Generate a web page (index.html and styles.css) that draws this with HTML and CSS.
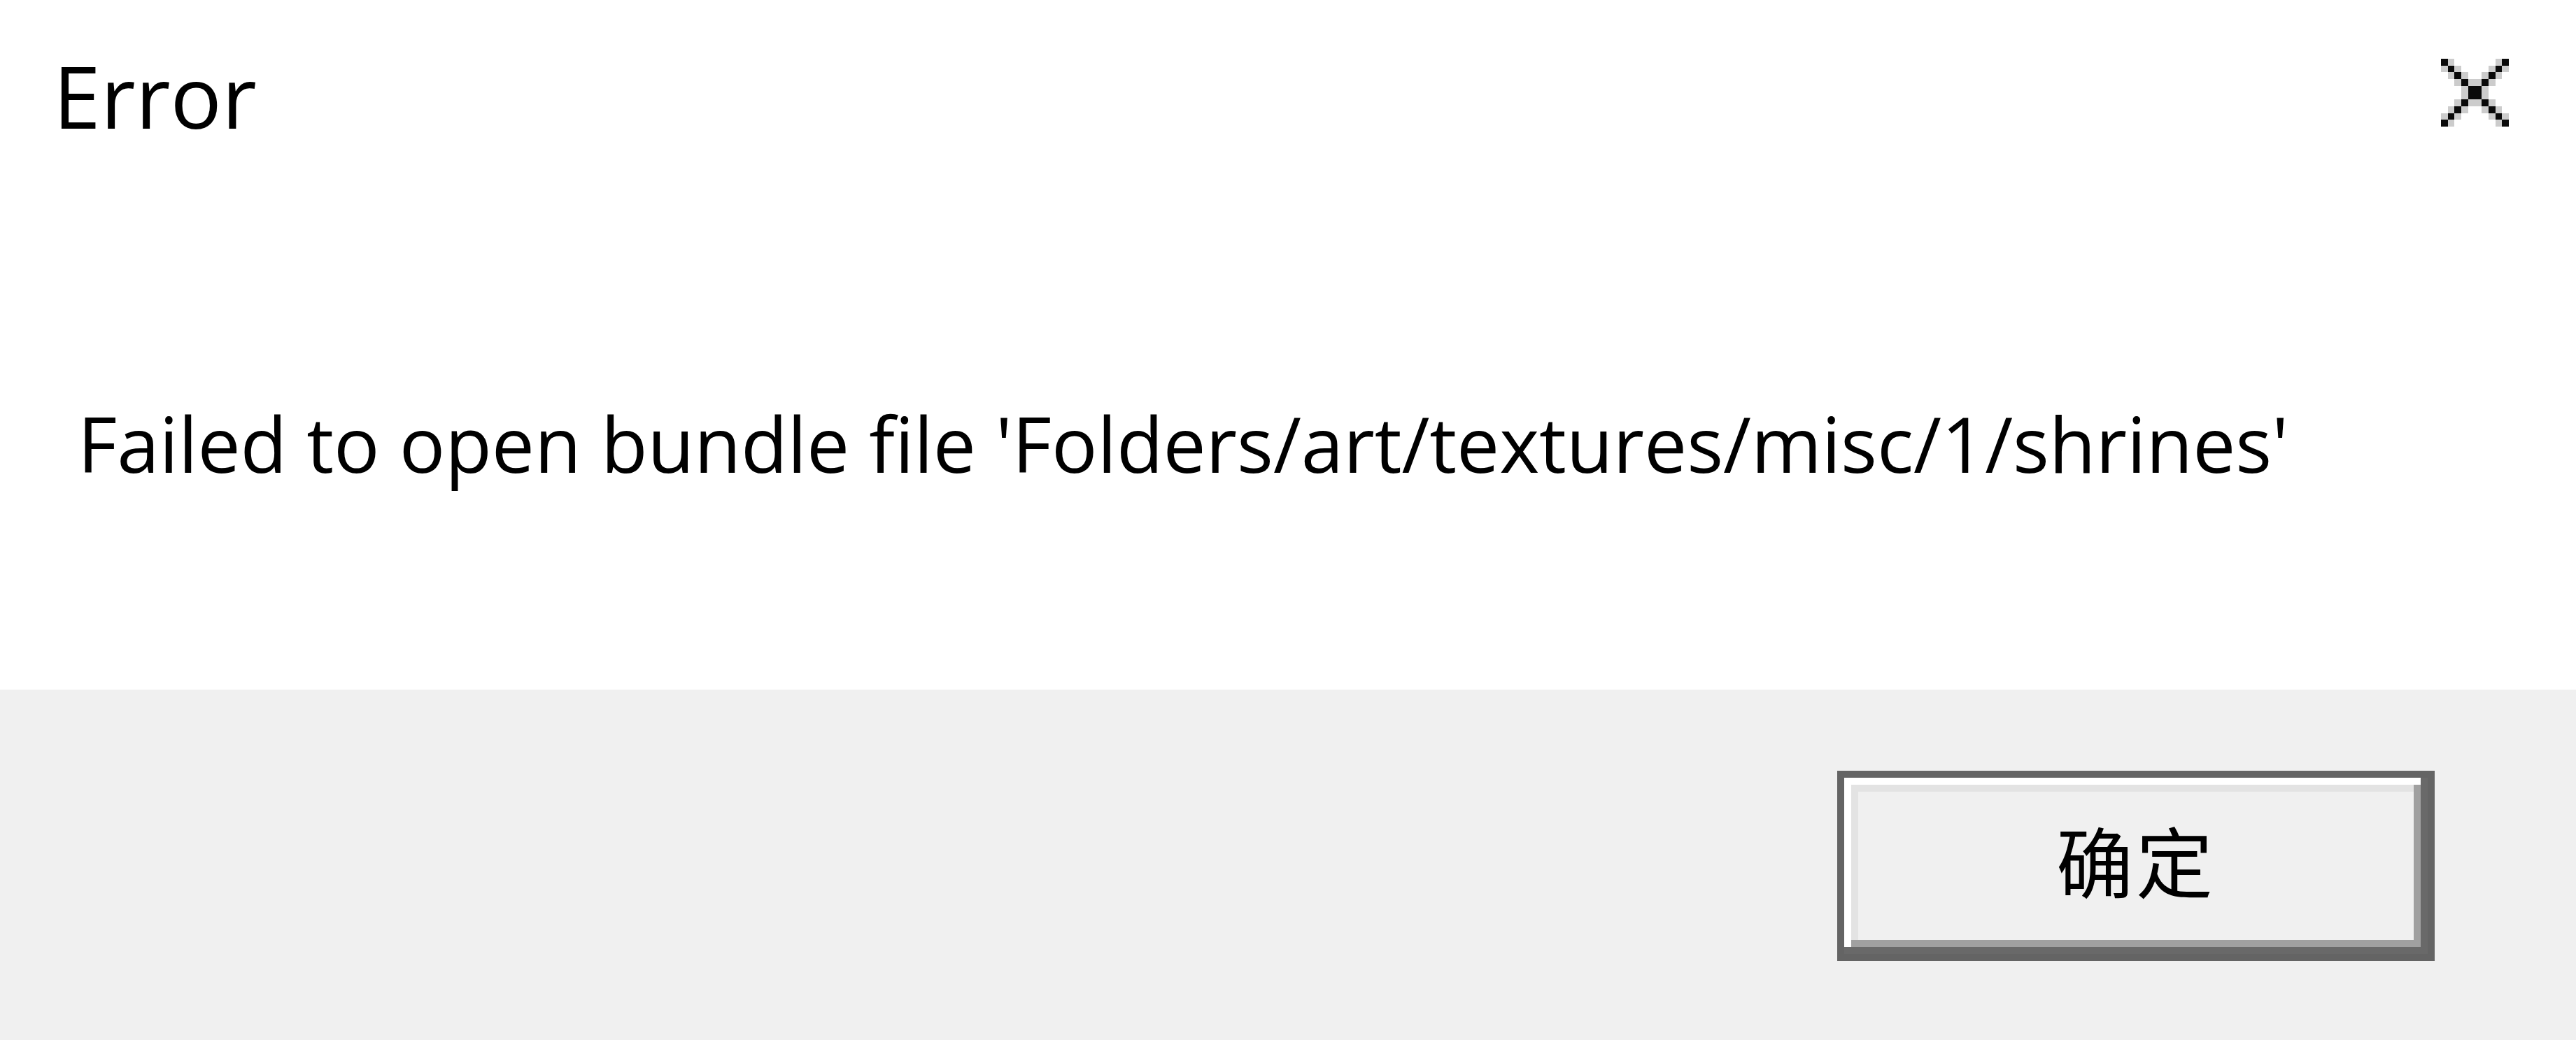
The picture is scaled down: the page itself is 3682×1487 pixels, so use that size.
FILE: index.html
```html
<!DOCTYPE html>
<html lang="en">
<head>
<meta charset="utf-8">
<title>Error</title>
<link rel="stylesheet" href="styles.css">
</head>
<body>
<div class="dialog">
  <div class="content">
    <div class="titlebar">
      <div class="title">Error</div>
      <div class="close" aria-label="Close">
        <svg viewBox="0 0 10 10" width="97" height="97" shape-rendering="crispEdges">
          <g fill="#cccccc">
            <rect x="1" y="0" width="1" height="1"/><rect x="8" y="0" width="1" height="1"/>
            <rect x="0" y="1" width="1" height="1"/><rect x="2" y="1" width="1" height="1"/><rect x="7" y="1" width="1" height="1"/><rect x="9" y="1" width="1" height="1"/>
            <rect x="1" y="2" width="1" height="1"/><rect x="3" y="2" width="1" height="1"/><rect x="6" y="2" width="1" height="1"/><rect x="8" y="2" width="1" height="1"/>
            <rect x="2" y="3" width="1" height="1"/><rect x="4" y="3" width="2" height="1"/><rect x="7" y="3" width="1" height="1"/>
            <rect x="3" y="4" width="1" height="2"/><rect x="6" y="4" width="1" height="2"/>
            <rect x="2" y="6" width="1" height="1"/><rect x="4" y="6" width="2" height="1"/><rect x="7" y="6" width="1" height="1"/>
            <rect x="1" y="7" width="1" height="1"/><rect x="3" y="7" width="1" height="1"/><rect x="6" y="7" width="1" height="1"/><rect x="8" y="7" width="1" height="1"/>
            <rect x="0" y="8" width="1" height="1"/><rect x="2" y="8" width="1" height="1"/><rect x="7" y="8" width="1" height="1"/><rect x="9" y="8" width="1" height="1"/>
            <rect x="1" y="9" width="1" height="1"/><rect x="8" y="9" width="1" height="1"/>
          </g>
          <g fill="#0a0a0a">
            <rect x="0" y="0" width="1" height="1"/><rect x="9" y="0" width="1" height="1"/>
            <rect x="1" y="1" width="1" height="1"/><rect x="8" y="1" width="1" height="1"/>
            <rect x="2" y="2" width="1" height="1"/><rect x="7" y="2" width="1" height="1"/>
            <rect x="3" y="3" width="1" height="1"/><rect x="6" y="3" width="1" height="1"/>
            <rect x="4" y="4" width="2" height="2"/>
            <rect x="3" y="6" width="1" height="1"/><rect x="6" y="6" width="1" height="1"/>
            <rect x="2" y="7" width="1" height="1"/><rect x="7" y="7" width="1" height="1"/>
            <rect x="1" y="8" width="1" height="1"/><rect x="8" y="8" width="1" height="1"/>
            <rect x="0" y="9" width="1" height="1"/><rect x="9" y="9" width="1" height="1"/>
          </g>
        </svg>
      </div>
    </div>
    <p class="message">Failed to open bundle file 'Folders/art/textures/misc/1/shrines'</p>
  </div>
  <div class="footer">
    <button class="ok-button" type="button"><span class="ok-label">确定</span></button>
  </div>
</div>
</body>
</html>
```
FILE: styles.css
```css
html, body {
  margin: 0;
  padding: 0;
  background: #ffffff;
}

.dialog {
  width: 3682px;
  height: 1487px;
  display: flex;
  flex-direction: column;
  font-family: "Open Sans", "Noto Sans", "Liberation Sans", sans-serif;
  color: #000000;
}

.content {
  height: 986px;
  background: #ffffff;
  display: flex;
  flex-direction: column;
}

.titlebar {
  display: flex;
  justify-content: space-between;
  align-items: flex-start;
  padding: 54px 96px 0 76px;
}

.title {
  font-size: 122px;
  line-height: normal;
}

.close {
  margin-top: 30px;
  width: 97px;
  height: 97px;
}

.close svg {
  display: block;
}

.message {
  margin: 339px 0 0 0;
  padding-left: 111px;
  font-size: 109px;
  line-height: normal;
  white-space: nowrap;
  letter-spacing: -0.1px;
}

.footer {
  flex: 1;
  background: #f0f0f0;
  display: flex;
  justify-content: flex-end;
  align-items: flex-start;
  padding: 116px 202px 0 0;
}

.ok-button {
  box-sizing: border-box;
  width: 854px;
  height: 272px;
  margin: 0;
  padding: 0 0 20px 0;
  border: 10px solid #646464;
  background: #f0f0f0;
  box-shadow:
    inset -10px -10px 0 0 #696969,
    inset 10px 10px 0 0 #ffffff,
    inset -20px -20px 0 0 #a0a0a0,
    inset 20px 20px 0 0 #e3e3e3;
  display: flex;
  align-items: center;
  justify-content: center;
  font-family: "Noto Sans CJK SC", "Noto Sans CJK JP", sans-serif;
  font-size: 110px;
  color: #000000;
}

.ok-label {
  line-height: 1;
  letter-spacing: 4px;
}
```
